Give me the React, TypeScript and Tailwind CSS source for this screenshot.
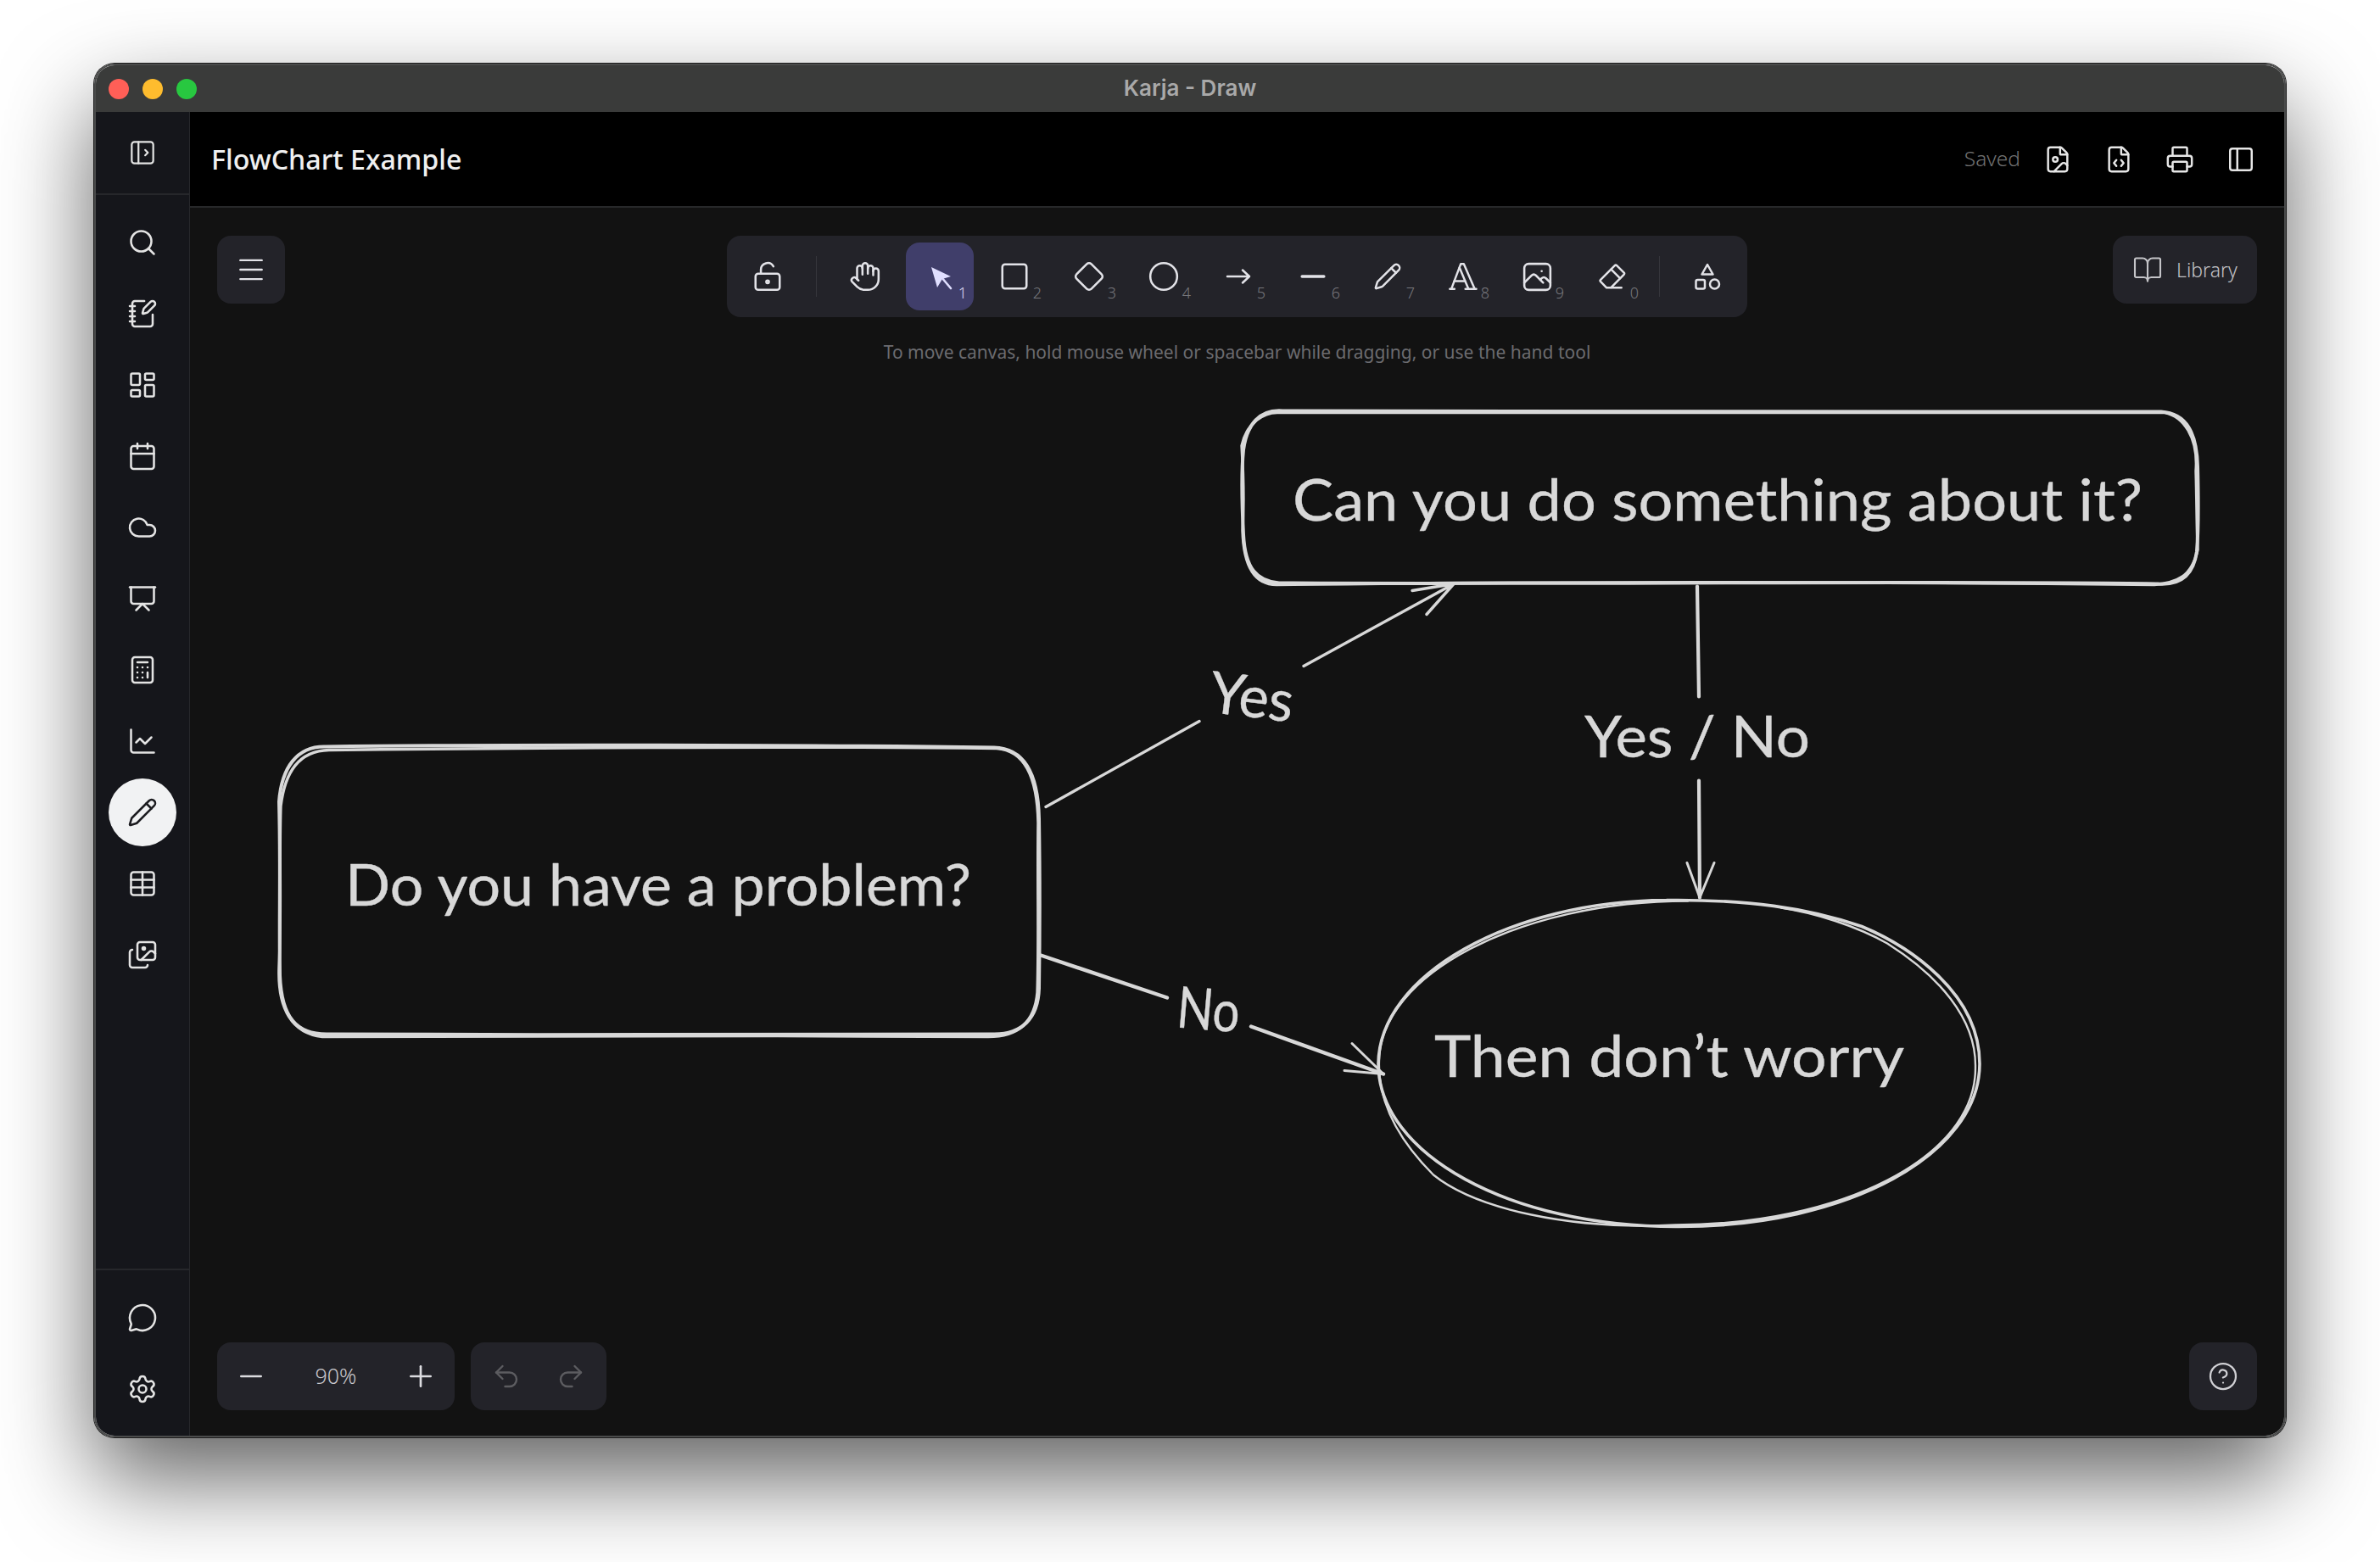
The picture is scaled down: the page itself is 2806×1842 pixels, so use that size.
import React from "react";
import {
  PanelLeft, Search, NotebookPen, LayoutDashboard, Calendar, Cloud, Presentation, Calculator,
  ChartLine, Pencil, Table, Images, MessageCircle, Settings, Menu, LockKeyholeOpen, Hand, Square,
  Diamond, Circle, Minus, FileImage, FileCode, Printer, BookOpen, Undo2, Redo2, CircleHelp, Plus,
} from "lucide-react";
import { TbLayoutSidebarLeftExpand, TbTypography, TbPhoto, TbEraser } from "react-icons/tb";

const ui = "font-['Noto_Sans',sans-serif]";

function NavItem({ children, active }: { children: React.ReactNode; active?: boolean }) {
  return (
    <div className={"flex h-[80px] w-[80px] items-center justify-center rounded-full " + (active ? "bg-[#f1f2f3] text-[#1b1b1f]" : "text-[#e4e4e4]")}>
      {children}
    </div>
  );
}

function Tool({ children, n, active }: { children: React.ReactNode; n?: string; active?: boolean }) {
  return (
    <div className={"relative flex h-[80px] w-[80px] items-center justify-center rounded-[16px] " + (active ? "bg-[#403e6a] text-[#e0dfff]" : "text-[#e3e3e8]")}>
      {children}
      {n && (
        <span className={"absolute bottom-[11px] right-[8px] text-[18px] leading-[20px] font-light " + (active ? "text-[#dddcf5]" : "text-[#77777c]")}>{n}</span>
      )}
    </div>
  );
}

function SelectionIcon() {
  return (
    <svg width="30" height="30" viewBox="0 0 30 30" className="ml-[2px] mt-[2px]">
      <path d="M4 3 L27 14 L17 17 L11 27 Z" fill="#e0dfff" />
      <path d="M16 15 L27 28" stroke="#e0dfff" strokeWidth="2.6" strokeLinecap="round" />
    </svg>
  );
}

function ArrowIcon() {
  return (
    <svg width="30" height="22" viewBox="0 0 30 22" fill="none" stroke="currentColor" strokeWidth="2.5" strokeLinecap="round" strokeLinejoin="round">
      <path d="M2 11 H28 M20 3.5 L28 11 L20 18.5" />
    </svg>
  );
}

function ShapesIcon() {
  return (
    <svg width="32" height="32" viewBox="0 0 32 32" fill="none" stroke="currentColor" strokeWidth="2.5" strokeLinejoin="round">
      <path d="M16 2 L9.5 13.5 H22.5 Z" />
      <rect x="2.5" y="20" width="10.5" height="10.5" rx="2" />
      <circle cx="24.5" cy="25" r="5.5" />
    </svg>
  );
}

const sk = "#d8d8d8";

function Diagram() {
  return (
    <svg viewBox="224 245 2469 1447" className="absolute inset-0 h-full w-full" fill="none" stroke={sk} strokeLinecap="round" strokeLinejoin="round">
      {/* left box */}
      <path strokeWidth="4" d="M384 880 C600 877 950 878 1172 881 C1208 882 1224 912 1225 965 C1226 1030 1226 1100 1225 1165 C1224 1200 1205 1220 1170 1219 C950 1218 650 1221 385 1219 C350 1219 332 1200 330 1150 C329 1080 331 1020 329 945 C332 905 350 879 384 880 Z" />
      <path strokeWidth="3.4" d="M388 884 C650 881 900 879 1175 882 C1207 884 1223 915 1224 970 C1223 1040 1225 1110 1223 1170 C1220 1205 1200 1222 1165 1222 C900 1221 600 1220 380 1222 C345 1218 327 1190 329 1140 C332 1080 329 1010 331 950 C336 910 352 885 388 884 Z" />
      {/* top box */}
      <path strokeWidth="4" d="M1512 484 C1800 486 2250 484 2548 485 C2578 487 2590 510 2591 550 C2592 590 2592 625 2590 650 C2586 678 2570 690 2544 688 C2300 684 1800 689 1508 687 C1482 685 1468 670 1466 630 C1464 590 1464 550 1466 530 C1470 500 1485 482 1512 484 Z" />
      <path strokeWidth="3.4" d="M1508 486 C1850 484 2200 488 2552 486 C2574 490 2592 515 2589 555 C2590 590 2590 620 2591 648 C2584 680 2566 687 2540 689 C2250 686 1850 685 1505 689 C1478 689 1466 665 1465 625 C1467 590 1466 560 1464 525 C1470 498 1490 485 1508 486 Z" />
      {/* ellipse */}
      <path strokeWidth="3.6" d="M1965 1061 C1780 1062 1626 1150 1625 1254 C1625 1360 1780 1447 1979 1446 C2180 1446 2334 1360 2334 1254 C2334 1170 2250 1115 2195 1092 C2130 1070 2060 1060 1965 1061" />
      <path strokeWidth="2.4" d="M1990 1062 C1790 1062 1627 1150 1626 1250 C1624 1300 1650 1345 1690 1385 C1740 1425 1850 1450 1975 1444 C2170 1444 2330 1365 2329 1258 C2330 1200 2285 1150 2225 1112 C2190 1092 2140 1076 2100 1070" />
      {/* yes arrow */}
      <path strokeWidth="3.4" d="M1233 951 L1414 850 M1537 785 L1714 688 M1665 696 L1714 688 L1682 724" />
      {/* yes/no arrow */}
      <path strokeWidth="4.2" d="M2001 691 L2003 821 M2003 920 L2004 1058" />
      <path strokeWidth="3" d="M1989 1017 L2004 1058 L2021 1017" />
      {/* no arrow */}
      <path strokeWidth="4.4" d="M1227 1126 L1376 1176 M1475 1210 L1631 1266" />
      <path strokeWidth="3" d="M1594 1230 L1631 1266 L1585 1262" />
      <g className="font-['Lato',sans-serif]" fill={sk} stroke={sk} strokeWidth="0.4">
        <text x="407" y="1067" fontSize="68" textLength="738" lengthAdjust="spacingAndGlyphs">Do you have a problem?</text>
        <text x="1524" y="613" fontSize="68" textLength="1002" lengthAdjust="spacingAndGlyphs">Can you do something about it?</text>
        <text x="1691" y="1269" fontSize="68" textLength="554" lengthAdjust="spacingAndGlyphs">Then don’t worry</text>
        <text x="1868" y="892" fontSize="68" textLength="266" lengthAdjust="spacingAndGlyphs">Yes / No</text>
        <text x="1426" y="845" fontSize="68" textLength="99" lengthAdjust="spacingAndGlyphs" transform="rotate(7 1475 825)">Yes</text>
        <text x="1388" y="1214" fontSize="68" textLength="74" lengthAdjust="spacingAndGlyphs" transform="rotate(5 1425 1190)">No</text>
      </g>
    </svg>
  );
}

export default function App() {
  const s = { size: 36, strokeWidth: 1.7 };
  const h = { size: 34, strokeWidth: 1.75 };
  const t = { size: 38, strokeWidth: 1.6 };
  return (
    <div className={"h-[1842px] w-[2806px] overflow-hidden bg-white pl-[111px] pt-[75px] " + ui}>
      <div className="flex h-[1620px] w-[2584px] flex-col overflow-hidden rounded-[24px] border-2 border-[#4a4b4b] shadow-[0_0_0_1px_#1c1c1c,0_48px_110px_rgba(0,0,0,0.62)]">
        {/* title bar */}
        <div className="grid h-[55px] shrink-0 grid-cols-[1fr_auto_1fr] items-center bg-[#3a3b3a] px-[15px]">
          <div className="flex gap-[16px]">
            <span className="h-[24px] w-[24px] rounded-full bg-[#ff5f57]" />
            <span className="h-[24px] w-[24px] rounded-full bg-[#febc2e]" />
            <span className="h-[24px] w-[24px] rounded-full bg-[#28c840]" />
          </div>
          <div className="mb-[2px] font-['Inter',sans-serif] text-[26px] font-semibold leading-[32px] text-[#a9a9a9]">Karja - Draw</div>
          <div />
        </div>
        <div className="flex min-h-0 flex-1">
          {/* sidebar */}
          <aside className="flex w-[111px] shrink-0 flex-col border-r border-[#26272b] bg-[#15161b]">
            <div className="flex h-[98px] shrink-0 items-center justify-center border-b-2 border-[#26272b] text-[#e4e4e4]">
              <TbLayoutSidebarLeftExpand size={38} strokeWidth={1.4} />
            </div>
            <nav className="flex flex-1 flex-col items-center gap-[4px] pt-[16px]">
              <NavItem><Search {...s} /></NavItem>
              <NavItem><NotebookPen {...s} /></NavItem>
              <NavItem><LayoutDashboard {...s} /></NavItem>
              <NavItem><Calendar {...s} /></NavItem>
              <NavItem><Cloud {...s} /></NavItem>
              <NavItem><Presentation {...s} /></NavItem>
              <NavItem><Calculator {...s} /></NavItem>
              <NavItem><ChartLine {...s} /></NavItem>
              <NavItem active><Pencil {...s} /></NavItem>
              <NavItem><Table {...s} /></NavItem>
              <NavItem><Images {...s} /></NavItem>
            </nav>
            <div className="flex h-[197px] shrink-0 flex-col items-center gap-[4px] border-t-2 border-[#26272b] pt-[16px]">
              <NavItem><MessageCircle {...s} /></NavItem>
              <NavItem><Settings {...s} /></NavItem>
            </div>
          </aside>
          {/* main */}
          <main className="flex min-w-0 flex-1 flex-col">
            <header className="flex h-[113px] shrink-0 items-center border-b-2 border-[#27282a] bg-black pl-[25px] pr-[34px]">
              <h1 className="pt-[2px] text-[32.2px] font-medium text-[#f0f0f0]">FlowChart Example</h1>
              <div className="ml-auto mr-[27px] text-[24.5px] font-light text-[#727272]">Saved</div>
              <div className="flex gap-[38px] text-[#e6e6e6]">
                <FileImage {...h} />
                <FileCode {...h} />
                <Printer {...h} />
                <PanelLeft {...h} />
              </div>
            </header>
            <div className="relative min-h-0 flex-1 bg-[#121212]">
              <Diagram />
              {/* menu */}
              <div className="absolute left-[32px] top-[33px] flex h-[80px] w-[80px] items-center justify-center rounded-[16px] bg-[#232329] text-[#e3e3e8]">
                <Menu size={38} strokeWidth={1.5} />
              </div>
              {/* toolbar */}
              <div className="absolute left-[633px] top-[33px] flex w-[1203px] flex-col items-center">
                <div className="flex h-[96px] w-full items-center gap-[8px] rounded-[16px] bg-[#232329] pl-[8px] pr-[7px]">
                  <Tool><LockKeyholeOpen {...t} /></Tool>
                  <div className="mx-[9px] h-[48px] w-px shrink-0 bg-[#36363c]" />
                  <Tool><Hand {...t} /></Tool>
                  <Tool n="1" active><SelectionIcon /></Tool>
                  <Tool n="2"><Square {...t} /></Tool>
                  <Tool n="3"><Diamond {...t} /></Tool>
                  <Tool n="4"><Circle {...t} /></Tool>
                  <Tool n="5"><ArrowIcon /></Tool>
                  <Tool n="6"><Minus size={44} strokeWidth={1.9} /></Tool>
                  <Tool n="7"><Pencil size={34} strokeWidth={1.75} /></Tool>
                  <Tool n="8"><TbTypography size={44} strokeWidth={1.35} /></Tool>
                  <Tool n="9"><TbPhoto size={41} strokeWidth={1.5} /></Tool>
                  <Tool n="0"><TbEraser size={40} strokeWidth={1.5} /></Tool>
                  <div className="mx-[8px] h-[48px] w-px shrink-0 bg-[#36363c]" />
                  <Tool><ShapesIcon /></Tool>
                </div>
                <div className="mt-[24px] text-[21px] leading-[34px] text-[#6b6b6f]">To move canvas, hold mouse wheel or spacebar while dragging, or use the hand tool</div>
              </div>
              {/* library */}
              <div className="absolute right-[32px] top-[33px] flex h-[80px] w-[170px] items-center justify-center gap-[16px] rounded-[16px] bg-[#232329] text-[#c4c4c8]">
                <BookOpen size={36} strokeWidth={1.4} />
                <span className="text-[23px] font-light">Library</span>
              </div>
              {/* zoom */}
              <div className="absolute bottom-[30px] left-[32px] flex gap-[19px]">
                <div className="flex h-[80px] w-[280px] items-center justify-between rounded-[16px] bg-[#232329] px-[20px] text-[#dcdce0]">
                  <Minus size={40} strokeWidth={1.6} />
                  <span className="text-[25px] font-light text-[#c8c8cc]">90%</span>
                  <Plus size={40} strokeWidth={1.6} />
                </div>
                <div className="flex h-[80px] w-[160px] items-center justify-between rounded-[16px] bg-[#232329] px-[24px] text-[#5c5c60]">
                  <Undo2 size={36} strokeWidth={1.6} />
                  <Redo2 size={36} strokeWidth={1.6} />
                </div>
              </div>
              {/* help */}
              <div className="absolute bottom-[30px] right-[32px] flex h-[80px] w-[80px] items-center justify-center rounded-[16px] bg-[#232329] text-[#d0d0d4]">
                <CircleHelp size={36} strokeWidth={1.5} />
              </div>
            </div>
          </main>
        </div>
      </div>
    </div>
  );
}
